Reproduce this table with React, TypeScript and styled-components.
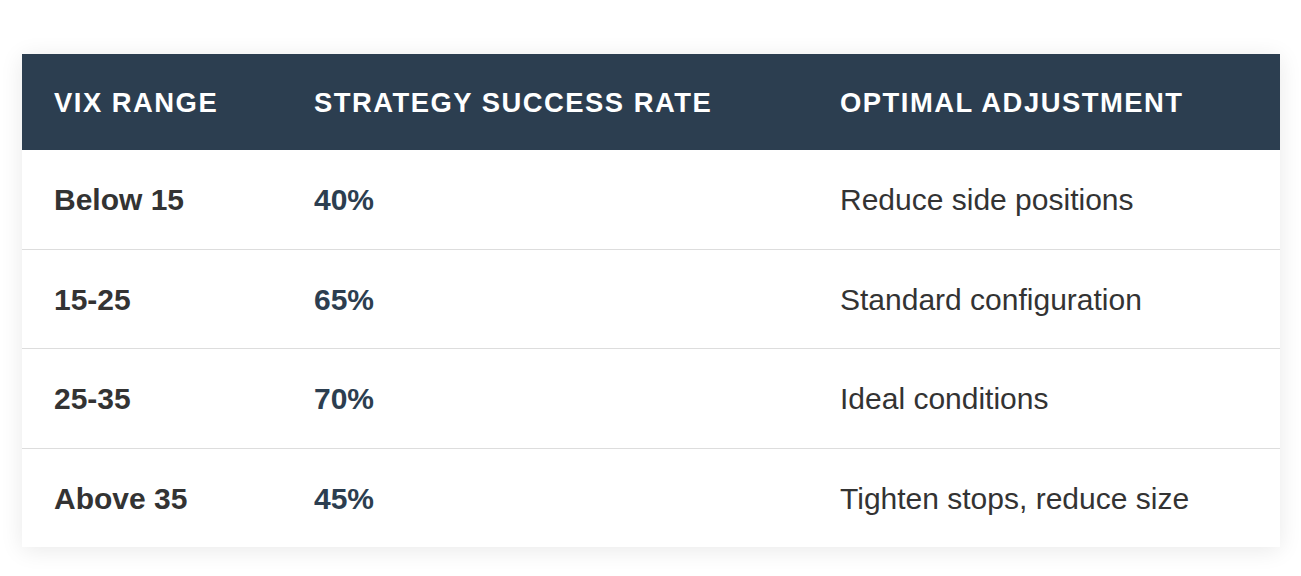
import React from "react";
import styled, { createGlobalStyle } from "styled-components";

const Global = createGlobalStyle`
  html, body { margin: 0; padding: 0; background: #ffffff; }
  body { font-family: "Liberation Sans", Arial, Helvetica, sans-serif; }
`;

const Page = styled.div`
  padding: 54px 21px 28px 22px;
`;

const Table = styled.div`
  width: 1258px;
  background: #ffffff;
  box-shadow: 0 3px 22px rgba(0, 0, 0, 0.09);
`;

const Row = styled.div<{ $header?: boolean; $last?: boolean }>`
  display: grid;
  grid-template-columns: 260px 526px 1fr;
  align-items: center;
  height: ${(p) => (p.$header ? "96px" : "98.5px")};
  background: ${(p) => (p.$header ? "#2c3e50" : "#ffffff")};
  border-bottom: ${(p) => (p.$header || p.$last ? "none" : "1.5px solid #dddddd")};
`;

const HeadCell = styled.div`
  padding-left: 32px;
  color: #ffffff;
  font-weight: 700;
  font-size: 27.4px;
  letter-spacing: 1.5px;
  text-transform: uppercase;
  padding-top: 2px;
`;

const Cell = styled.div<{ $tone?: "label" | "rate" | "plain" }>`
  padding-left: 32px;
  padding-top: 2px;
  font-size: 30px;
  font-weight: ${(p) => (p.$tone === "plain" ? 400 : 700)};
  color: ${(p) => (p.$tone === "rate" ? "#2c3e50" : "#333333")};
`;

const rows = [
  ["Below 15", "40%", "Reduce side positions"],
  ["15-25", "65%", "Standard configuration"],
  ["25-35", "70%", "Ideal conditions"],
  ["Above 35", "45%", "Tighten stops, reduce size"],
];

export default function App() {
  return (
    <>
      <Global />
      <Page>
        <Table>
          <Row $header>
            <HeadCell>VIX Range</HeadCell>
            <HeadCell>Strategy Success Rate</HeadCell>
            <HeadCell>Optimal Adjustment</HeadCell>
          </Row>
          {rows.map((r, i) => (
            <Row key={r[0]} $last={i === rows.length - 1}>
              <Cell $tone="label">{r[0]}</Cell>
              <Cell $tone="rate">{r[1]}</Cell>
              <Cell $tone="plain">{r[2]}</Cell>
            </Row>
          ))}
        </Table>
      </Page>
    </>
  );
}
